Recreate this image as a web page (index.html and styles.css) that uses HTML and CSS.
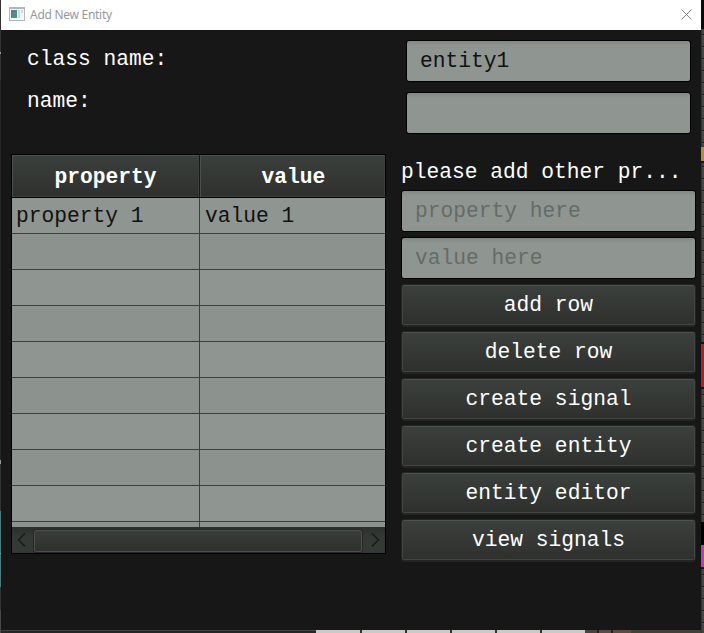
FILE: index.html
```
<!DOCTYPE html>
<html lang="en">
<head>
<meta charset="utf-8">
<title>Add New Entity</title>
<link rel="stylesheet" href="styles.css">
</head>
<body>
<main class="window">
  <header class="titlebar">
    <svg class="app-icon" width="16" height="14" viewBox="0 0 16 14"><defs><linearGradient id="g" x2="1" y2="1"><stop stop-color="#5279a5"/><stop offset="1" stop-color="#43a071"/></linearGradient></defs><path fill="#b2b5ba" d="M0 0h16v14H0z"/><path fill="#f5f6f7" d="M1 2h14v11H1z"/><path fill="url(#g)" d="M2 3h6v8H2z"/><path fill="#d2d7d9" d="M9 3h2v8H9zM12 3h2v3h-2z"/></svg>
    <h1 class="title">Add New Entity</h1>
    <svg class="close" width="11" height="11" viewBox="0 0 11 11"><path d="M.5.5l10 10M10.5.5l-10 10" fill="none" stroke="#888"/></svg>
  </header>
  <section class="form">
    <label class="label" for="cls">class name:</label><input class="field" id="cls" value="entity1">
    <label class="label second" for="nm">name:</label><input class="field" id="nm">
  </section>
  <section class="content">
    <div class="table-view">
      <div class="row head"><div class="cell">property</div><div class="cell">value</div></div>
      <div class="rows">
        <div class="row"><div class="cell">property 1</div><div class="cell">value 1</div></div>
        <div class="row"><div class="cell"></div><div class="cell"></div></div>
        <div class="row"><div class="cell"></div><div class="cell"></div></div>
        <div class="row"><div class="cell"></div><div class="cell"></div></div>
        <div class="row"><div class="cell"></div><div class="cell"></div></div>
        <div class="row"><div class="cell"></div><div class="cell"></div></div>
        <div class="row"><div class="cell"></div><div class="cell"></div></div>
        <div class="row"><div class="cell"></div><div class="cell"></div></div>
        <div class="row"><div class="cell"></div><div class="cell"></div></div>
        <div class="row"><div class="cell"></div><div class="cell"></div></div>
      </div>
      <div class="scrollbar">
        <svg class="arrow" width="22" height="26" viewBox="0 0 22 26"><path d="M13 7.5L6.500 14l6.500 6.500" fill="none" stroke="#505650"/><path d="M13 6.500L6.500 13l6.500 6.500" fill="none" stroke="#1c1e1c" stroke-width="1.800"/></svg>
        <div class="thumb"></div>
        <svg class="arrow" width="23" height="26" viewBox="0 0 23 26"><path d="M10 7.500l6.500 6.500L10 20.500" fill="none" stroke="#505650"/><path d="M10 6.500l6.500 6.500L10 19.500" fill="none" stroke="#1c1e1c" stroke-width="1.800"/></svg>
      </div>
    </div>
    <div class="side">
      <div class="hint">please add other pr...</div>
      <input class="field" placeholder="property here">
      <input class="field" placeholder="value here">
      <button class="button">add row</button>
      <button class="button">delete row</button>
      <button class="button">create signal</button>
      <button class="button">create entity</button>
      <button class="button">entity editor</button>
      <button class="button">view signals</button>
    </div>
  </section>
</main>
<div class="edge-left"></div>
<div class="edge-right"></div>
<div class="edge-bottom"></div>
</body>
</html>
```
FILE: styles.css
```
* { box-sizing: border-box; }
body {
  margin: 0;
  width: 704px;
  height: 633px;
  overflow: hidden;
  display: grid;
  grid-template: 630px 3px / 1px 700px 3px;
  background: #292929;
  font: 21.25px/24px "Courier New", "Liberation Mono", monospace;
}
.window { grid-area: 1 / 2; background: #171717; color: #fff; }
.edge-left {
  grid-area: 1 / 1 / 3 / 2;
  background: linear-gradient(#333 52px, #999 52px 54px, #333 54px 80px, #252525 80px 460px, #999 460px 464px, #333 464px 511px, #4c7a7d 511px 553px, #999 553px 554px, #4c7a7d 554px 587px, #333 587px 610px, #484848 610px);
}
.edge-right {
  grid-area: 1 / 3 / 3 / 4;
  background:
    linear-gradient(#080808 0 29px, transparent 29px 147px, #b78f1d 147px 161px, #111 161px 163px, transparent 163px 342px, #111 342px 344px, #c9151e 344px 387px, #111 387px 389px, transparent 389px 522px, #000 522px 545px, #d62eb4 545px 567px, #111 567px 569px, transparent 569px),
    linear-gradient(90deg, #333 1px, transparent 1px),
    repeating-linear-gradient(#464644 0 10px, #1b1b1b 10px 11px, #53534f 11px 12px);
}
.edge-bottom {
  grid-area: 2 / 2;
  background: linear-gradient(90deg, #444 0 315px, #cdc9c8 315px 359px, #333 359px 361px, #cdc9c8 361px 404px, #333 404px 406px, #cdc9c8 406px 449px, #333 449px 451px, #cdc9c8 451px 494px, #333 494px 496px, #cdc9c8 496px 539px, #333 539px 541px, #cdc9c8 541px 584px, #49423c 584px 596px, #222 596px 598px, #5b4c43 598px 610px, #222 610px 612px, #5b4c43 612px 630px, #444039 630px) top / 100% 3px,
    #292929;
}
.edge-bottom::before { content: ""; display: table; }
.edge-bottom::after {
  content: "";
  display: block;
  width: 315px;
  height: 2px;
  margin-top: 1px;
  background: #272627;
}
.titlebar { height: 30px; background: #fff; display: flex; align-items: center; padding: 0 9px 2px 8px; }
.app-icon { margin-right: 5px; }
.title { margin: 2px auto 0 0; font: 12px/16px "Noto Sans", sans-serif; color: #999; letter-spacing: -.28px; }
.form { display: grid; grid-template-columns: 379px 285px; grid-auto-rows: 42px; row-gap: 10px; padding: 10px 0 0 26px; }
.label { padding-top: 7px; }
.label.second { margin-top: -10px; }
.field {
  display: block;
  width: 100%;
  height: 42px;
  padding: 0 13px 1px;
  border: 1px solid #000;
  border-radius: 3px;
  outline: 0;
  background: linear-gradient(#818984, #8f9691 5px);
  color: #111;
  font: inherit;
}
.field::placeholder { color: #656c67; opacity: 1; }
.content { display: flex; gap: 15px; padding: 20px 5px 0 10px; }
.table-view { width: 375px; height: 400px; border: 1px solid #000; display: flex; flex-direction: column; }
.row { display: grid; grid-template-columns: 188px 1fr; height: 36px; flex: none; border-bottom: 1px solid #393f3b; background: #8f9691; color: #111; }
.rows .row:nth-child(even) { background: #8c938e; }
.cell { padding: 6px 4px 0; border-right: 1px solid #393f3b; }
.cell:last-child { padding-left: 5px; border-right: 0; }
.head { height: 43px; border-bottom-color: #000; background: #303330; color: #fff; font-weight: bold; text-align: center; }
.head .cell { padding: 10px 0 0; border-right-color: #171817; background: linear-gradient(#3b403c, #2e302d); box-shadow: inset 1px 1px #4a504c, inset -1px -1px #3c403d; }
.head .cell:last-child { padding-left: 2px; }
.rows { flex: 1; overflow: hidden; }
.scrollbar { height: 26px; display: flex; align-items: center; background: linear-gradient(#2c302d, #343935 10px, #343935); }
.arrow { flex: none; }
.thumb { flex: 1; height: 22px; margin-top: 1px; border: 1px solid #494f4a; border-radius: 2px; background: linear-gradient(#393d39, #2e302d); box-shadow: 0 0 0 1px #252825; }
.side { width: 295px; display: flex; flex-direction: column; gap: 5px; }
.hint { height: 31px; padding-top: 6px; white-space: nowrap; }
.button {
  height: 40px;
  flex: none;
  margin: 1px;
  padding: 0;
  border: 1px solid #414643;
  border-top-color: #4c524e;
  border-radius: 2px;
  background: linear-gradient(#3b403c, #2e302d);
  box-shadow: 0 0 0 1px #232523, 0 2px #232523;
  color: #fff;
  font: inherit;
}
```
